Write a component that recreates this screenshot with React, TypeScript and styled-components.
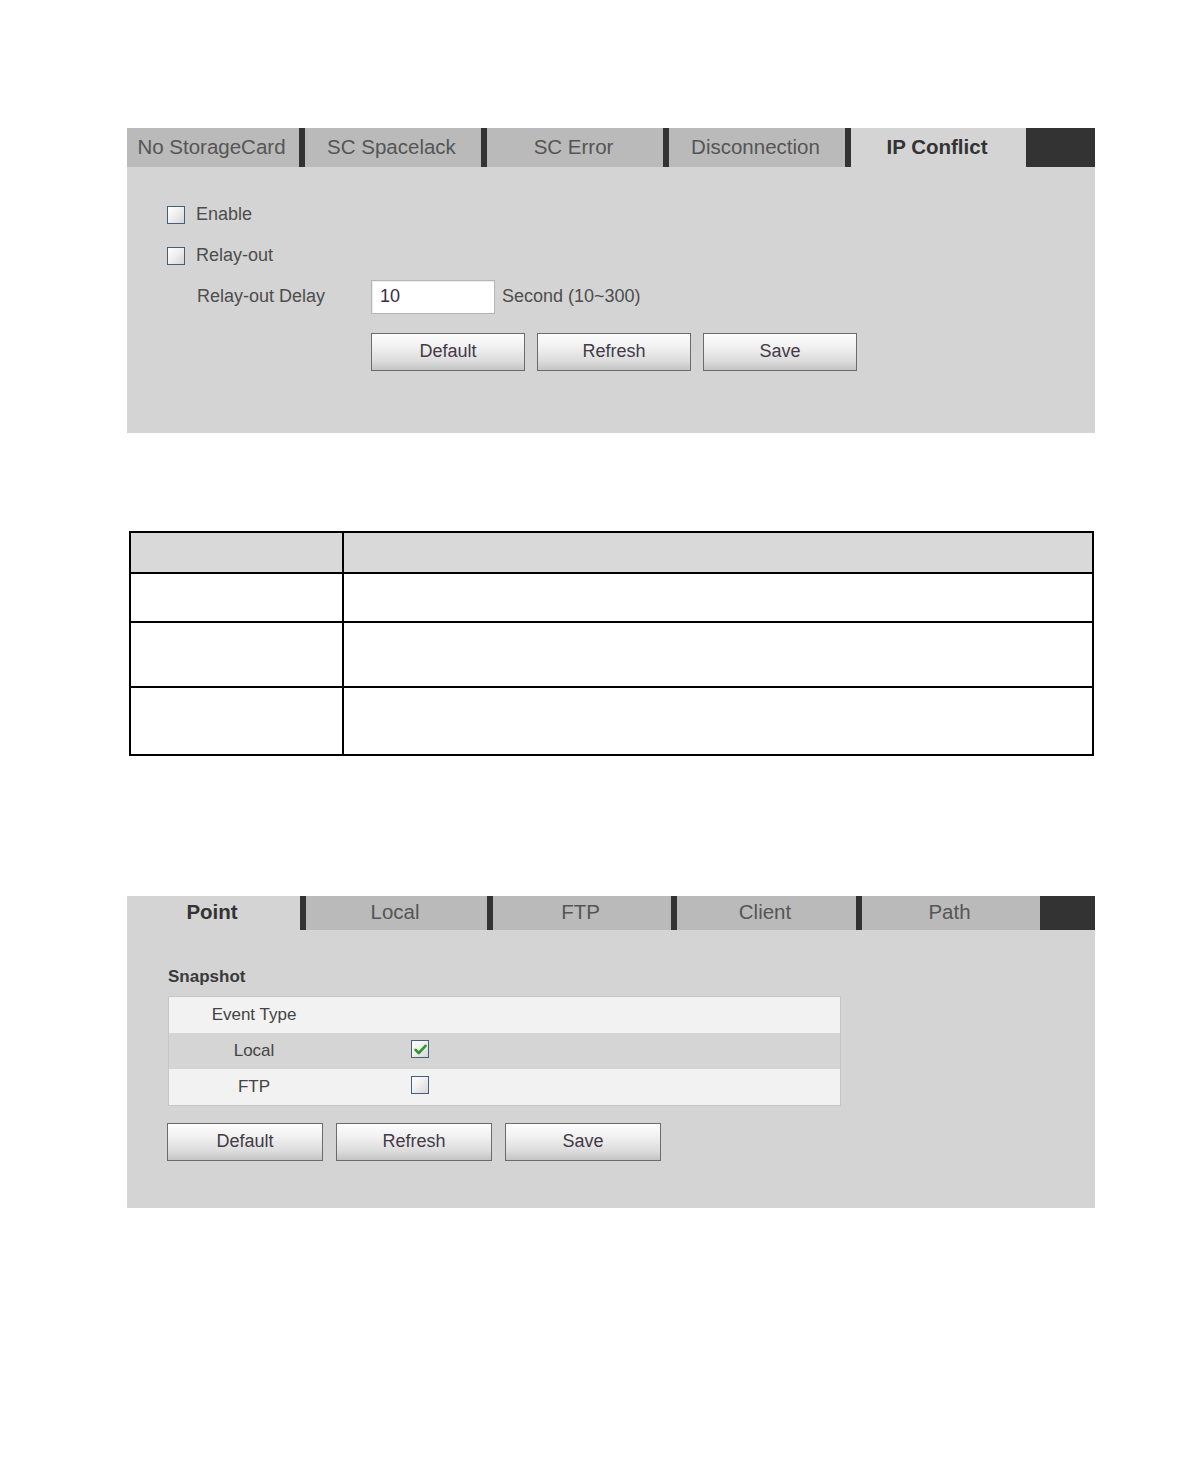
import React from "react";
import styled, { createGlobalStyle } from "styled-components";

const Global = createGlobalStyle`
  html, body { margin: 0; padding: 0; background: #ffffff; }
  body { font-family: "Liberation Sans", Arial, sans-serif; }
  #root { width: 1191px; min-height: 1474px; }
`;

const Page = styled.div`
  width: 1191px;
  min-height: 1474px;
  padding-top: 128px;
  box-sizing: border-box;
  display: flex;
  flex-direction: column;
`;

const Panel = styled.section<{ $mt?: number }>`
  margin-left: 127px;
  margin-top: ${(p) => p.$mt ?? 0}px;
  width: 968px;
  background: #d4d4d4;
  display: flex;
  flex-direction: column;
`;

const TabBar = styled.div<{ $h: number }>`
  display: flex;
  height: ${(p) => p.$h}px;
  background: #333333;
  gap: 6px;
`;

const Tab = styled.div<{ $w: number; $active?: boolean }>`
  width: ${(p) => p.$w}px;
  flex: none;
  display: flex;
  align-items: center;
  justify-content: center;
  background: ${(p) => (p.$active ? "#d4d4d4" : "#bababa")};
  color: ${(p) => (p.$active ? "#333333" : "#555555")};
  font-weight: ${(p) => (p.$active ? "bold" : "normal")};
  font-size: 20.5px;
  padding-bottom: 2px;
  padding-right: 3px;
  box-sizing: border-box;
`;

const Body = styled.div<{ $pad: string }>`
  padding: ${(p) => p.$pad};
  display: flex;
  flex-direction: column;
`;

const FormRow = styled.div<{ $indent: number }>`
  height: 41px;
  display: flex;
  align-items: center;
  padding-left: ${(p) => p.$indent}px;
  font-size: 18px;
  color: #4d4d4d;
`;

const Box = styled.span`
  width: 16px;
  height: 16px;
  flex: none;
  border: 1.5px solid #445f7c;
  background: linear-gradient(135deg, #ffffff 0%, #f0f0f0 45%, #d6d6d6 100%);
  display: inline-flex;
  align-items: center;
  justify-content: center;
`;

const CheckLabel = styled.span`
  margin-left: 11px;
`;

const FieldLabel = styled.span`
  width: 174px;
  flex: none;
`;

const TextInput = styled.div`
  width: 124px;
  height: 34px;
  box-sizing: border-box;
  background: #ffffff;
  border: 1px solid #b5b5b5;
  box-shadow: inset 1px 1px 1px rgba(0, 0, 0, 0.08);
  display: flex;
  align-items: center;
  padding-left: 8px;
  font-size: 18px;
  color: #3d2b48;
`;

const Unit = styled.span`
  margin-left: 7px;
`;

const ButtonRow = styled.div<{ $ml: number; $mt: number; $gap: number }>`
  display: flex;
  gap: ${(p) => p.$gap}px;
  margin-left: ${(p) => p.$ml}px;
  margin-top: ${(p) => p.$mt}px;
`;

const Button = styled.div<{ $w: number }>`
  width: ${(p) => p.$w}px;
  height: 38px;
  box-sizing: border-box;
  border: 1.5px solid #6b6b6b;
  background: linear-gradient(180deg, #fdfdfd 0%, #f1f1f1 35%, #dcdcdc 75%, #c4c4c4 100%);
  display: flex;
  align-items: center;
  justify-content: center;
  font-size: 18px;
  color: #443a48;
  padding-bottom: 2px;
`;

const DocTable = styled.table`
  margin-left: 129px;
  margin-top: 98px;
  width: 965px;
  border-collapse: collapse;
  td {
    border: 2px solid #000000;
    padding: 0;
  }
`;

const HeadRow = styled.tr`
  height: 41px;
  background: #d9d9d9;
`;

const DocRow = styled.tr<{ $h: number }>`
  height: ${(p) => p.$h}px;
`;

const FirstCell = styled.td`
  width: 211px;
`;

const SectionTitle = styled.div`
  font-size: 17px;
  font-weight: bold;
  color: #3a3a3a;
  height: 22px;
  line-height: 22px;
  margin-left: 1px;
`;

const EventTable = styled.div`
  margin-top: 8px;
  margin-left: 1px;
  width: 673px;
  border: 1px solid #c6c6c6;
  box-sizing: border-box;
  display: flex;
  flex-direction: column;
`;

const EventRow = styled.div<{ $shade?: boolean }>`
  height: 36px;
  display: flex;
  align-items: center;
  background: ${(p) => (p.$shade ? "#d5d5d5" : "#f2f2f2")};
  font-size: 17px;
  color: #444444;
`;

const EventName = styled.div`
  width: 170px;
  text-align: center;
  flex: none;
`;

const EventCheck = styled.div`
  padding-left: 72px;
  display: flex;
  align-items: center;
  margin-top: -4px;
`;

const Check = () => (
  <svg width="13" height="11" viewBox="0 0 13 11">
    <path d="M1.5 5.8 L4.8 9 L11.5 1.8" fill="none" stroke="#2f9a2f" strokeWidth="2.6" strokeLinecap="round" strokeLinejoin="round" />
  </svg>
);

export default function App() {
  const topTabs = [
    { t: "No StorageCard", w: 172 },
    { t: "SC Spacelack", w: 176 },
    { t: "SC Error", w: 176 },
    { t: "Disconnection", w: 176 },
    { t: "IP Conflict", w: 175, active: true },
  ];
  const bottomTabs = [
    { t: "Point", w: 173, active: true },
    { t: "Local", w: 181 },
    { t: "FTP", w: 178 },
    { t: "Client", w: 179 },
    { t: "Path", w: 178 },
  ];
  return (
    <>
      <Global />
      <Page>
        <Panel>
          <TabBar $h={39}>
            {topTabs.map((x) => (
              <Tab key={x.t} $w={x.w} $active={x.active}>
                {x.t}
              </Tab>
            ))}
          </TabBar>
          <Body $pad="27px 0 62px 0">
            <FormRow $indent={40}>
              <Box />
              <CheckLabel>Enable</CheckLabel>
            </FormRow>
            <FormRow $indent={40}>
              <Box />
              <CheckLabel>Relay-out</CheckLabel>
            </FormRow>
            <FormRow $indent={70}>
              <FieldLabel>Relay-out Delay</FieldLabel>
              <TextInput>10</TextInput>
              <Unit>Second (10~300)</Unit>
            </FormRow>
            <ButtonRow $ml={244} $mt={16} $gap={12}>
              <Button $w={154}>Default</Button>
              <Button $w={154}>Refresh</Button>
              <Button $w={154}>Save</Button>
            </ButtonRow>
          </Body>
        </Panel>

        <DocTable>
          <tbody>
            <HeadRow>
              <FirstCell />
              <td />
            </HeadRow>
            <DocRow $h={49}>
              <FirstCell />
              <td />
            </DocRow>
            <DocRow $h={65}>
              <FirstCell />
              <td />
            </DocRow>
            <DocRow $h={68}>
              <FirstCell />
              <td />
            </DocRow>
          </tbody>
        </DocTable>

        <Panel $mt={140}>
          <TabBar $h={34}>
            {bottomTabs.map((x) => (
              <Tab key={x.t} $w={x.w} $active={x.active}>
                {x.t}
              </Tab>
            ))}
          </TabBar>
          <Body $pad="36px 0 47px 40px">
            <SectionTitle>Snapshot</SectionTitle>
            <EventTable>
              <EventRow>
                <EventName>Event Type</EventName>
              </EventRow>
              <EventRow $shade>
                <EventName>Local</EventName>
                <EventCheck>
                  <Box>
                    <Check />
                  </Box>
                </EventCheck>
              </EventRow>
              <EventRow>
                <EventName>FTP</EventName>
                <EventCheck>
                  <Box />
                </EventCheck>
              </EventRow>
            </EventTable>
            <ButtonRow $ml={0} $mt={17} $gap={13}>
              <Button $w={156}>Default</Button>
              <Button $w={156}>Refresh</Button>
              <Button $w={156}>Save</Button>
            </ButtonRow>
          </Body>
        </Panel>
      </Page>
    </>
  );
}
